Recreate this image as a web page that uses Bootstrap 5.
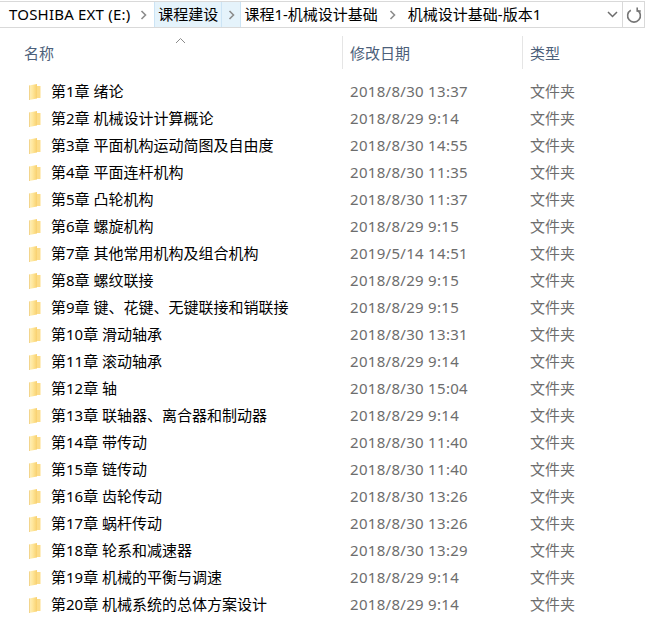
<!DOCTYPE html>
<html lang="zh-CN">
<head>
    <meta charset="UTF-8">
    <meta name="viewport" content="width=device-width, initial-scale=1.0">
    <title>机械设计基础-版本1</title>
    <link href="https://cdn.jsdelivr.net/npm/bootstrap@5.3.0/dist/css/bootstrap.min.css" rel="stylesheet">
    <style>
    body { background: #fff; font-family: "Noto Sans", "Noto Sans CJK SC", sans-serif; font-size: 15px; color: #000; overflow: hidden; }
    .path-bar { height: 27px; margin: 1px 3px 0 0; border: 1px solid #d9d9d9; border-left: 0; }
    .crumb { height: 25px; line-height: 24px; padding: 0 3px; white-space: nowrap; }
    .crumb-first { padding-left: 9px; letter-spacing: .2px; }
    .crumb-on { background: #e5f3fb; border-left: 1px solid #cce4f5; border-right: 1px solid #cce4f5; }
    .sep { width: 21px; height: 25px; flex: none; }
    .sep-on { background: #e5f3fb; border-right: 1px solid #cce4f5; width: 19px; }
    .sep-wide { width: 24px; }
    .bar-end { width: 37px; height: 25px; }
    .refresh { width: 22px; flex: none; border-left: 1px solid #d9d9d9; }
    .head-row { height: 50px; padding-left: 24px; color: #4c607a; }
    .head-cell { height: 33px; line-height: 35px; margin-top: 8px; }
    .col-name { width: 326px; flex: none; }
    .col-date { width: 180px; flex: none; }
    .head-cell.col-date, .head-cell.col-type { border-left: 1px solid #e5e5e5; padding-left: 7px; }
    .head-cell.col-date { width: 181px; margin-left: -8px; }
    .head-cell.col-type { margin-left: -1px; }
    .sort-mark { left: 175px; top: 37px; }
    .file-row { height: 27px; line-height: 27px; padding-left: 29px; white-space: nowrap; }
    .file-row svg { flex: none; margin-right: 10px; }
    .file-name { width: 299px; flex: none; }
    .file-date, .file-type { color: #6d6d6d; }
    .file-date { width: 180px; flex: none; letter-spacing: .3px; }
    </style>
</head>
<body>
    <svg width="0" height="0" class="position-absolute">
        <defs>
            <linearGradient id="fold" x1="0" x2="1" y1="0" y2="0">
                <stop offset="0" stop-color="#fdf0c0"/>
                <stop offset=".45" stop-color="#ffe79c"/>
                <stop offset="1" stop-color="#f8d06e"/>
            </linearGradient>
            <symbol id="folder" viewBox="0 0 12 16">
                <path d="M0 1.5 8 0v14.5l-8 1.5z" fill="url(#fold)"/>
                <path d="M8 2h3.5v12H8z" fill="#fcdc88"/>
                <path d="M0 1.5h1V16H0z" fill="#f3d58c"/>
            </symbol>
        </defs>
    </svg>

    <div class="path-bar d-flex align-items-center">
        <div class="crumb crumb-first">TOSHIBA EXT (E:)</div>
        <div class="sep d-flex align-items-center justify-content-center">
            <svg width="7" height="10" viewBox="0 0 7 10"><path d="M1.5 1 5.5 5l-4 4" fill="none" stroke="#8c8c8c" stroke-width="1.6"/></svg>
        </div>
        <div class="crumb crumb-on">课程建设</div>
        <div class="sep sep-on d-flex align-items-center justify-content-center">
            <svg width="7" height="10" viewBox="0 0 7 10"><path d="M1.5 1 5.5 5l-4 4" fill="none" stroke="#8c8c8c" stroke-width="1.6"/></svg>
        </div>
        <div class="crumb">课程1-机械设计基础</div>
        <div class="sep sep-wide d-flex align-items-center justify-content-center">
            <svg width="7" height="10" viewBox="0 0 7 10"><path d="M1.5 1 5.5 5l-4 4" fill="none" stroke="#8c8c8c" stroke-width="1.6"/></svg>
        </div>
        <div class="crumb">机械设计基础-版本1</div>
        <div class="bar-end ms-auto d-flex">
            <div class="flex-grow-1 d-flex align-items-center">
                <svg width="11" height="7" viewBox="0 0 11 7"><path d="M1 1l4.5 4.5L10 1" fill="none" stroke="#6d6d6d" stroke-width="1.5"/></svg>
            </div>
            <div class="refresh d-flex align-items-center justify-content-center">
                <svg width="16" height="16" viewBox="0 0 16 16"><path d="M4.8 3.2a6.4 6.4 0 1 0 6.4 0" fill="none" stroke="#767676" stroke-width="1.6"/><path d="M11.2 .6v3.4h3.6" fill="none" stroke="#767676" stroke-width="1.6"/></svg>
            </div>
        </div>
    </div>

    <svg class="position-absolute sort-mark" width="11" height="7" viewBox="0 0 11 7"><path d="M1 6l4.5-4.5L10 6" fill="none" stroke="#8a8a8a"/></svg>

    <div class="head-row d-flex">
        <div class="head-cell col-name">名称</div>
        <div class="head-cell col-date">修改日期</div>
        <div class="head-cell col-type">类型</div>
    </div>

    <div class="file-list">
        <div class="file-row d-flex align-items-center"><svg width="12" height="16"><use href="#folder"/></svg><span class="file-name">第1章 绪论</span><span class="file-date">2018/8/30 13:37</span><span class="file-type">文件夹</span></div>
        <div class="file-row d-flex align-items-center"><svg width="12" height="16"><use href="#folder"/></svg><span class="file-name">第2章 机械设计计算概论</span><span class="file-date">2018/8/29 9:14</span><span class="file-type">文件夹</span></div>
        <div class="file-row d-flex align-items-center"><svg width="12" height="16"><use href="#folder"/></svg><span class="file-name">第3章 平面机构运动简图及自由度</span><span class="file-date">2018/8/30 14:55</span><span class="file-type">文件夹</span></div>
        <div class="file-row d-flex align-items-center"><svg width="12" height="16"><use href="#folder"/></svg><span class="file-name">第4章 平面连杆机构</span><span class="file-date">2018/8/30 11:35</span><span class="file-type">文件夹</span></div>
        <div class="file-row d-flex align-items-center"><svg width="12" height="16"><use href="#folder"/></svg><span class="file-name">第5章 凸轮机构</span><span class="file-date">2018/8/30 11:37</span><span class="file-type">文件夹</span></div>
        <div class="file-row d-flex align-items-center"><svg width="12" height="16"><use href="#folder"/></svg><span class="file-name">第6章 螺旋机构</span><span class="file-date">2018/8/29 9:15</span><span class="file-type">文件夹</span></div>
        <div class="file-row d-flex align-items-center"><svg width="12" height="16"><use href="#folder"/></svg><span class="file-name">第7章 其他常用机构及组合机构</span><span class="file-date">2019/5/14 14:51</span><span class="file-type">文件夹</span></div>
        <div class="file-row d-flex align-items-center"><svg width="12" height="16"><use href="#folder"/></svg><span class="file-name">第8章 螺纹联接</span><span class="file-date">2018/8/29 9:15</span><span class="file-type">文件夹</span></div>
        <div class="file-row d-flex align-items-center"><svg width="12" height="16"><use href="#folder"/></svg><span class="file-name">第9章 键、花键、无键联接和销联接</span><span class="file-date">2018/8/29 9:15</span><span class="file-type">文件夹</span></div>
        <div class="file-row d-flex align-items-center"><svg width="12" height="16"><use href="#folder"/></svg><span class="file-name">第10章 滑动轴承</span><span class="file-date">2018/8/30 13:31</span><span class="file-type">文件夹</span></div>
        <div class="file-row d-flex align-items-center"><svg width="12" height="16"><use href="#folder"/></svg><span class="file-name">第11章 滚动轴承</span><span class="file-date">2018/8/29 9:14</span><span class="file-type">文件夹</span></div>
        <div class="file-row d-flex align-items-center"><svg width="12" height="16"><use href="#folder"/></svg><span class="file-name">第12章 轴</span><span class="file-date">2018/8/30 15:04</span><span class="file-type">文件夹</span></div>
        <div class="file-row d-flex align-items-center"><svg width="12" height="16"><use href="#folder"/></svg><span class="file-name">第13章 联轴器、离合器和制动器</span><span class="file-date">2018/8/29 9:14</span><span class="file-type">文件夹</span></div>
        <div class="file-row d-flex align-items-center"><svg width="12" height="16"><use href="#folder"/></svg><span class="file-name">第14章 带传动</span><span class="file-date">2018/8/30 11:40</span><span class="file-type">文件夹</span></div>
        <div class="file-row d-flex align-items-center"><svg width="12" height="16"><use href="#folder"/></svg><span class="file-name">第15章 链传动</span><span class="file-date">2018/8/30 11:40</span><span class="file-type">文件夹</span></div>
        <div class="file-row d-flex align-items-center"><svg width="12" height="16"><use href="#folder"/></svg><span class="file-name">第16章 齿轮传动</span><span class="file-date">2018/8/30 13:26</span><span class="file-type">文件夹</span></div>
        <div class="file-row d-flex align-items-center"><svg width="12" height="16"><use href="#folder"/></svg><span class="file-name">第17章 蜗杆传动</span><span class="file-date">2018/8/30 13:26</span><span class="file-type">文件夹</span></div>
        <div class="file-row d-flex align-items-center"><svg width="12" height="16"><use href="#folder"/></svg><span class="file-name">第18章 轮系和减速器</span><span class="file-date">2018/8/30 13:29</span><span class="file-type">文件夹</span></div>
        <div class="file-row d-flex align-items-center"><svg width="12" height="16"><use href="#folder"/></svg><span class="file-name">第19章 机械的平衡与调速</span><span class="file-date">2018/8/29 9:14</span><span class="file-type">文件夹</span></div>
        <div class="file-row d-flex align-items-center"><svg width="12" height="16"><use href="#folder"/></svg><span class="file-name">第20章 机械系统的总体方案设计</span><span class="file-date">2018/8/29 9:14</span><span class="file-type">文件夹</span></div>
    </div>
    <script src="https://cdn.jsdelivr.net/npm/bootstrap@5.3.0/dist/js/bootstrap.bundle.min.js"></script>
</body>
</html>
